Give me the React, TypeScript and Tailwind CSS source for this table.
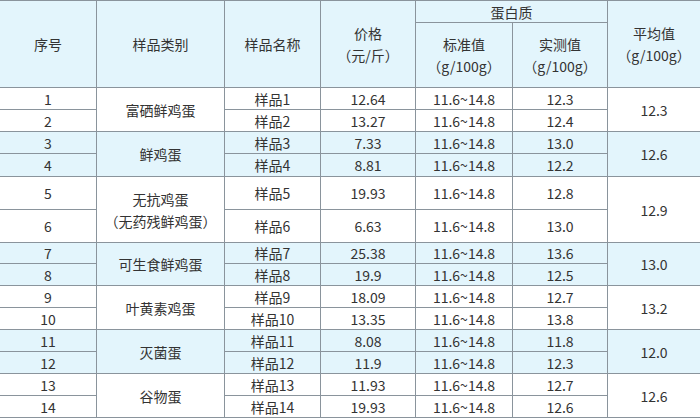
const rows = [
  { no: 1, name: '样品1', price: '12.64', val: '12.3' },
  { no: 2, name: '样品2', price: '13.27', val: '12.4' },
  { no: 3, name: '样品3', price: '7.33', val: '13.0' },
  { no: 4, name: '样品4', price: '8.81', val: '12.2' },
  { no: 5, name: '样品5', price: '19.93', val: '12.8' },
  { no: 6, name: '样品6', price: '6.63', val: '13.0' },
  { no: 7, name: '样品7', price: '25.38', val: '13.6' },
  { no: 8, name: '样品8', price: '19.9', val: '12.5' },
  { no: 9, name: '样品9', price: '18.09', val: '12.7' },
  { no: 10, name: '样品10', price: '13.35', val: '13.8' },
  { no: 11, name: '样品11', price: '8.08', val: '11.8' },
  { no: 12, name: '样品12', price: '11.9', val: '12.3' },
  { no: 13, name: '样品13', price: '11.93', val: '12.7' },
  { no: 14, name: '样品14', price: '19.93', val: '12.6' },
];

// one entry per pair of rows
const groups = [
  { kind: ['富硒鲜鸡蛋'], avg: '12.3' },
  { kind: ['鲜鸡蛋'], avg: '12.6' },
  { kind: ['无抗鸡蛋', '（无药残鲜鸡蛋）'], avg: '12.9' },
  { kind: ['可生食鲜鸡蛋'], avg: '13.0' },
  { kind: ['叶黄素鸡蛋'], avg: '13.2' },
  { kind: ['灭菌蛋'], avg: '12.0' },
  { kind: ['谷物蛋'], avg: '12.6' },
];

const head = 'flex flex-col items-center justify-center text-center bg-[#e3f5fc] leading-[22px]';

function Cell({ bg, span, children }: { bg: string; span?: boolean; children: React.ReactNode }) {
  return (
    <div
      className={`flex flex-col items-center justify-center text-center whitespace-nowrap ${bg} ${
        span ? 'row-span-2 leading-[22px]' : ''
      }`}
    >
      {children}
    </div>
  );
}

export default function App() {
  return (
    <div
      className="w-[700px] h-[418px] overflow-hidden bg-white text-[14px] leading-[18px] text-[#333]"
      style={{ fontFamily: '"Noto Sans CJK SC", "Noto Sans", sans-serif' }}
    >
      <div className="grid grid-cols-[96px_127px_95px_94px_96px_94px_92px] grid-rows-[21px_64px_21px_21px_21px_22px_32px_32px_20px_21px_21px_21px_21px_21px_21px_21px] gap-px bg-[#8a949c] py-px">
        <div className={`${head} row-span-2`}>序号</div>
        <div className={`${head} row-span-2`}>样品类别</div>
        <div className={`${head} row-span-2`}>样品名称</div>
        <div className={`${head} row-span-2`}>
          <span>价格</span>
          <span>（元/斤）</span>
        </div>
        <div className={`${head} col-span-2 leading-[18px]`}>蛋白质</div>
        <div className={`${head} row-span-2`}>
          <span>平均值</span>
          <span>（g/100g）</span>
        </div>
        <div className={head}>
          <span>标准值</span>
          <span>（g/100g）</span>
        </div>
        <div className={head}>
          <span>实测值</span>
          <span>（g/100g）</span>
        </div>

        {groups.map((g, gi) => {
          const bg = gi % 2 === 1 ? 'bg-[#e3f5fc]' : 'bg-white';
          const a = rows[gi * 2];
          const b = rows[gi * 2 + 1];
          return [
            <Cell key={`n${a.no}`} bg={bg}>{a.no}</Cell>,
            <Cell key={`k${gi}`} bg={bg} span>
              {g.kind.map((k) => (
                <span key={k}>{k}</span>
              ))}
            </Cell>,
            <Cell key={`m${a.no}`} bg={bg}>{a.name}</Cell>,
            <Cell key={`p${a.no}`} bg={bg}>{a.price}</Cell>,
            <Cell key={`s${a.no}`} bg={bg}>11.6~14.8</Cell>,
            <Cell key={`v${a.no}`} bg={bg}>{a.val}</Cell>,
            <Cell key={`a${gi}`} bg={bg} span>{g.avg}</Cell>,
            <Cell key={`n${b.no}`} bg={bg}>{b.no}</Cell>,
            <Cell key={`m${b.no}`} bg={bg}>{b.name}</Cell>,
            <Cell key={`p${b.no}`} bg={bg}>{b.price}</Cell>,
            <Cell key={`s${b.no}`} bg={bg}>11.6~14.8</Cell>,
            <Cell key={`v${b.no}`} bg={bg}>{b.val}</Cell>,
          ];
        })}
      </div>
    </div>
  );
}
